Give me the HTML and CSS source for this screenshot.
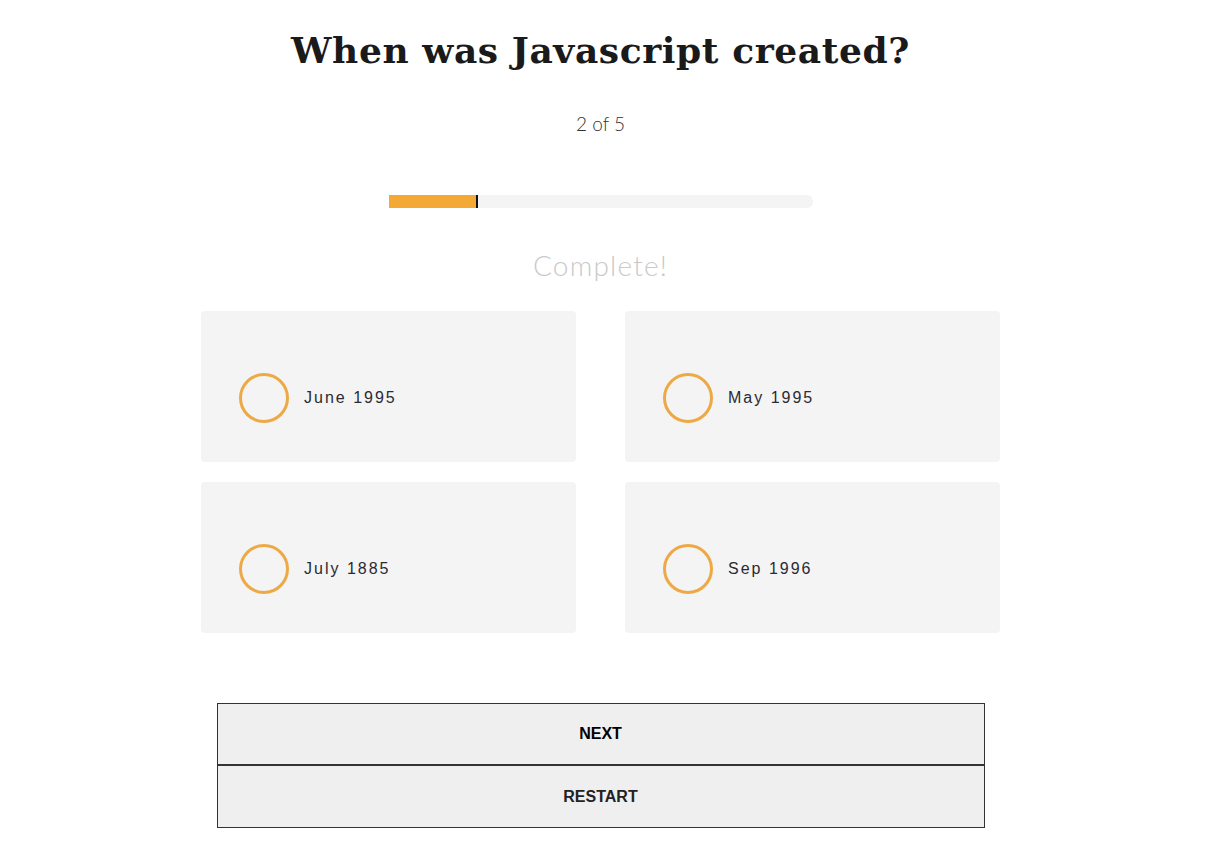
FILE: index.html
```html
<!DOCTYPE html>
<html>
<head>
<meta charset="utf-8">
<link rel="stylesheet" href="styles.css">
</head>
<body>
<main class="quiz">
  <h1 class="title">When was Javascript created?</h1>
  <p class="count">2 of 5</p>
  <div class="progress"><div class="progress-fill" style="width:21%"></div></div>
  <p class="status">Complete!</p>
  <div class="options">
    <div class="option"><span class="radio"></span><span class="label">June 1995</span></div>
    <div class="option"><span class="radio"></span><span class="label">May 1995</span></div>
    <div class="option"><span class="radio"></span><span class="label">July 1885</span></div>
    <div class="option"><span class="radio"></span><span class="label">Sep 1996</span></div>
  </div>
  <div class="actions">
    <button class="btn btn-next">Next</button>
    <button class="btn btn-restart">Restart</button>
  </div>
</main>
</body>
</html>
```
FILE: styles.css
```css
html, body {
  margin: 0;
  padding: 0;
  background: #fff;
}
.quiz {
  width: 1201px;
  display: flex;
  flex-direction: column;
  align-items: center;
  padding-top: 24px;
}
.title {
  margin: 0;
  font-family: "DejaVu Serif", "Liberation Serif", serif;
  font-weight: bold;
  font-size: 36px;
  letter-spacing: 0.6px;
  line-height: 52px;
  color: #1a1a1a;
}
.count {
  margin: 36px 0 0;
  font-family: "Lato", "Open Sans", sans-serif;
  font-weight: 300;
  font-size: 19px;
  line-height: 24px;
  color: #333;
}
.progress {
  margin-top: 59px;
  width: 424px;
  height: 13px;
  background: #f4f4f4;
  border-radius: 0 6px 6px 0;
  display: flex;
}
.progress-fill {
  box-sizing: border-box;
  background: #f4a935;
  border-right: 2px solid #111;
  height: 100%;
}
.status {
  margin: 41px 0 0;
  font-family: "Lato", "Open Sans", sans-serif;
  font-weight: 300;
  font-size: 28px;
  letter-spacing: 1.2px;
  line-height: 32px;
  color: #c9c9c9;
}
.options {
  margin-top: 30px;
  display: grid;
  grid-template-columns: 375px 375px;
  column-gap: 49px;
  row-gap: 20px;
}
.option {
  height: 151px;
  background: #f4f4f4;
  border-radius: 4px;
  display: flex;
  align-items: center;
  padding: 22px 0 0 38px;
  box-sizing: border-box;
}
.radio {
  width: 50px;
  height: 50px;
  box-sizing: border-box;
  border: 3px solid #eda945;
  border-radius: 50%;
  flex: none;
}
.label {
  margin-left: 15px;
  font-family: "Liberation Sans", Arial, sans-serif;
  font-size: 16px;
  letter-spacing: 2px;
  color: #2a2a33;
}
.actions {
  margin-top: 70px;
  width: 768px;
  display: flex;
  flex-direction: column;
}
.btn {
  height: 62px;
  background: #efefef;
  border: 1px solid #333;
  font-family: "Liberation Sans", Arial, sans-serif;
  font-weight: bold;
  font-size: 16px;
  text-transform: uppercase;
  color: #000;
  padding: 0;
  margin: 0;
}
.btn-restart {
  height: 63px;
  color: #222;
}
```
